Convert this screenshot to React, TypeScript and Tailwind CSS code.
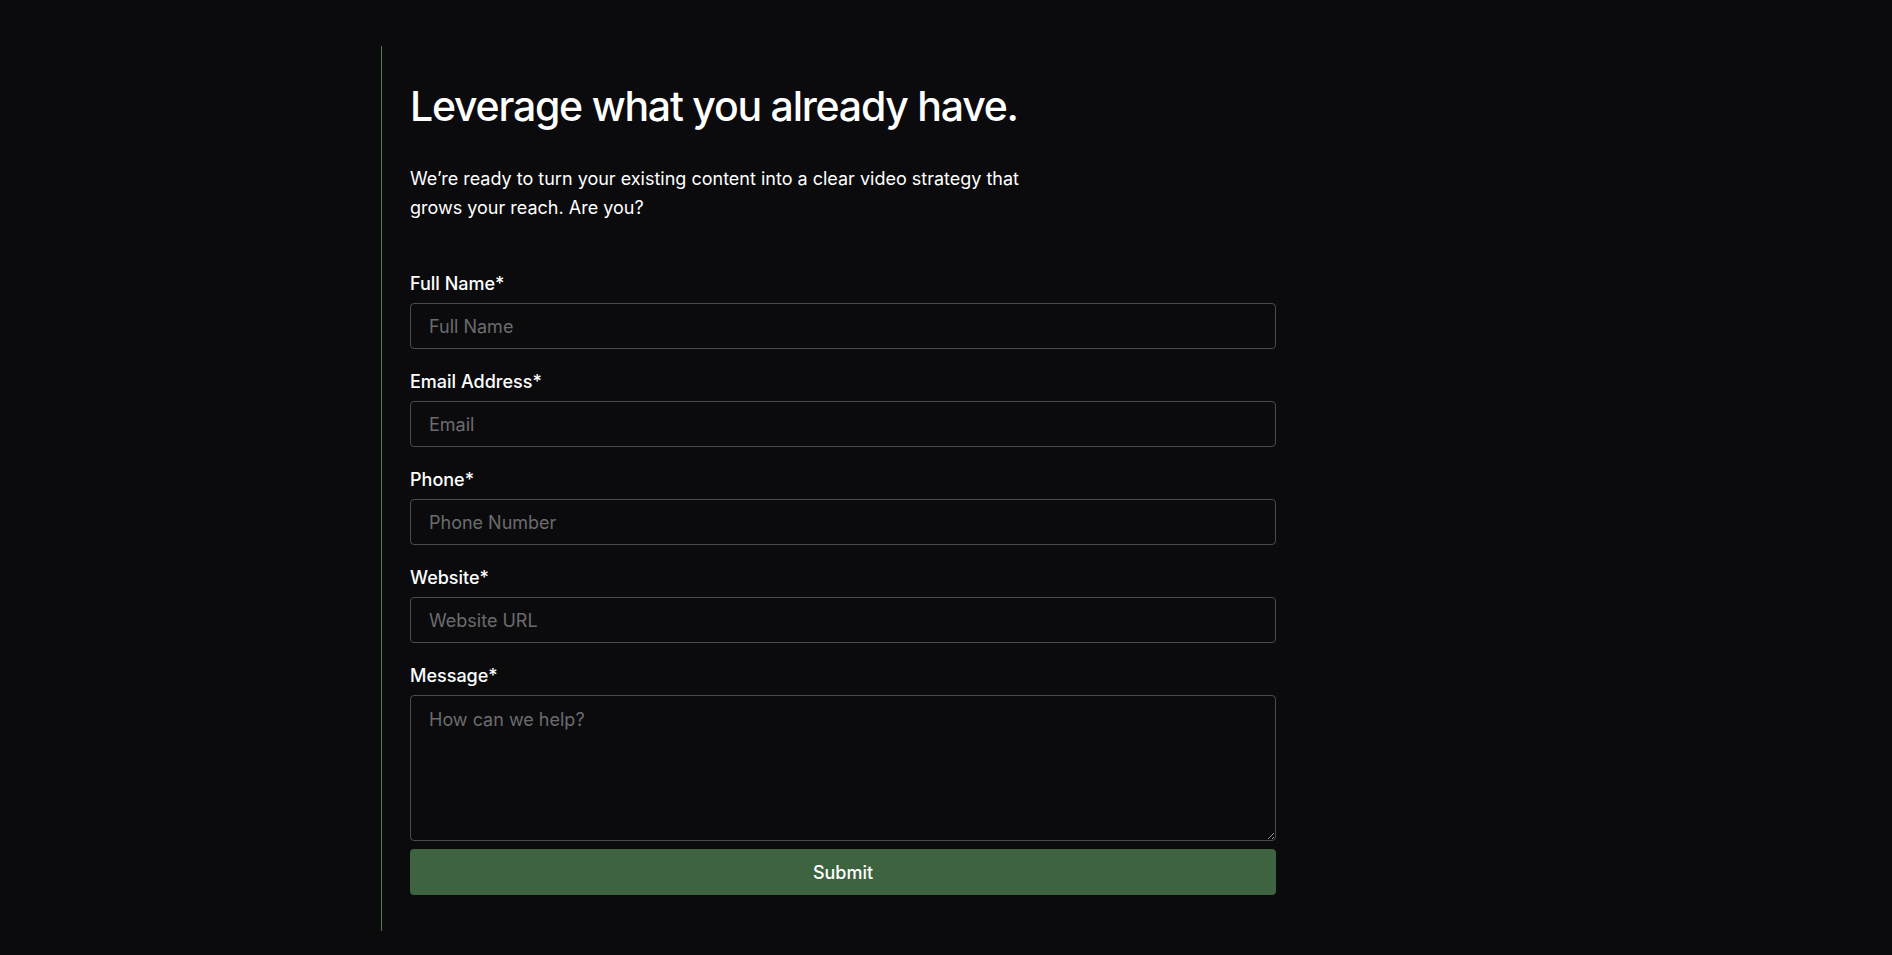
import React from 'react';

const fields = [
  { id: 'name', label: 'Full Name*', placeholder: 'Full Name', type: 'text' },
  { id: 'email', label: 'Email Address*', placeholder: 'Email', type: 'email' },
  { id: 'phone', label: 'Phone*', placeholder: 'Phone Number', type: 'tel' },
  { id: 'website', label: 'Website*', placeholder: 'Website URL', type: 'url' },
];

const inputClass =
  'block w-full h-[46px] px-[18px] text-[18px] text-white bg-[#0b0b0d] border border-[#4a4a4c] rounded-[4px] outline-none placeholder:text-[#6b6b6e]';

export default function App() {
  return (
    <div
      className="min-h-screen bg-[#0b0b0d] text-white"
      style={{ fontFamily: 'Inter, "Noto Sans", sans-serif' }}
    >
      <div className="max-w-[1130px] mx-auto pt-[46px] pb-[25px]">
        <div className="border-l border-[#4f7a52] pl-[28px] pt-[36px] pb-[36px]">
          <h1 className="text-[41px] leading-[1.2] font-medium tracking-[-0.03em]">
            Leverage what you already have.
          </h1>
          <p className="mt-[33px] max-w-[620px] text-[18px] leading-[29px]">
            We’re ready to turn your existing content into a clear video strategy that grows your reach. Are you?
          </p>

          <form className="mt-[48px] w-[866px]" onSubmit={(e) => e.preventDefault()}>
            {fields.map((f) => (
              <div key={f.id} className="mb-[19px]">
                <label htmlFor={f.id} className="block text-[18px] leading-[27px] font-medium mb-[6px]">
                  {f.label}
                </label>
                <input id={f.id} type={f.type} placeholder={f.placeholder} className={inputClass} />
              </div>
            ))}
            <div>
              <label htmlFor="message" className="block text-[18px] leading-[27px] font-medium mb-[6px]">
                Message*
              </label>
              <textarea
                id="message"
                placeholder="How can we help?"
                className="block w-full h-[146px] px-[18px] py-[10px] text-[18px] leading-[27px] text-white bg-[#0b0b0d] border border-[#4a4a4c] rounded-[4px] outline-none placeholder:text-[#6b6b6e]"
              />
            </div>
            <button
              type="submit"
              className="mt-[8px] w-full h-[46px] rounded-[4px] bg-[#3e6340] text-[18px] font-medium text-white"
            >
              Submit
            </button>
          </form>
        </div>
      </div>
    </div>
  );
}
